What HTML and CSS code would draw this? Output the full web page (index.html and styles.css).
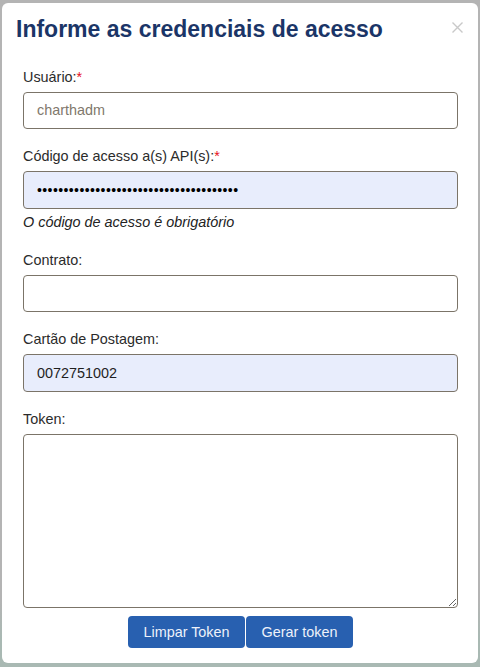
FILE: index.html
```html
<!DOCTYPE html>
<html lang="pt-BR">
<head>
<meta charset="utf-8">
<title>Credenciais</title>
<link rel="stylesheet" href="styles.css">
</head>
<body>
<div class="modal">
  <div class="modal-header">
    <h1 class="modal-title">Informe as credenciais de acesso</h1>
    <button class="close" type="button" aria-label="Fechar">
      <svg width="11" height="11" viewBox="0 0 11 11"><path d="M0.5 0.5 L10.5 10.5 M10.5 0.5 L0.5 10.5" stroke="#c9c9c9" stroke-width="1.4" fill="none"/></svg>
    </button>
  </div>
  <div class="modal-body">
    <div class="field">
      <label class="label">Usuário:<span class="req">*</span></label>
      <input class="input input-muted" type="text" value="charthadm">
    </div>
    <div class="field">
      <label class="label">Código de acesso a(s) API(s):<span class="req">*</span></label>
      <input class="input input-fill input-pass" type="text" value="••••••••••••••••••••••••••••••••••••••">
      <div class="error">O código de acesso é obrigatório</div>
    </div>
    <div class="field">
      <label class="label">Contrato:</label>
      <input class="input" type="text" value="">
    </div>
    <div class="field field-wide">
      <label class="label">Cartão de Postagem:</label>
      <input class="input input-fill" type="text" value="0072751002">
    </div>
    <div class="field field-last">
      <label class="label">Token:</label>
      <textarea class="textarea"></textarea>
    </div>
    <div class="actions">
      <button class="btn" type="button">Limpar Token</button>
      <button class="btn btn-narrow" type="button">Gerar token</button>
    </div>
  </div>
</div>
</body>
</html>
```
FILE: styles.css
```css
* { box-sizing: border-box; }
html, body { margin: 0; padding: 0; }
body {
  width: 480px;
  height: 667px;
  overflow: hidden;
  background: linear-gradient(to bottom, #b4b4b4 0, #b4b4b4 600px, #a9b9b3 640px, #a9b9b3 100%);
  font-family: "Liberation Sans", Arial, sans-serif;
  padding: 3px 2px 4px 2px;
}
.modal {
  background: #fff;
  border-radius: 6px;
  height: 660px;
  width: 476px;
  display: flex;
  flex-direction: column;
}
.modal-header {
  display: flex;
  justify-content: space-between;
  align-items: flex-start;
  padding: 13px 15px 0 14px;
}
.modal-title {
  margin: 0;
  font-size: 23px;
  line-height: 27.6px;
  font-weight: bold;
  color: #1b3567;
}
.close {
  border: 0;
  background: none;
  padding: 0;
  margin-top: 6px;
  width: 11px;
  height: 11px;
  display: block;
}
.close svg { display: block; }
.modal-body {
  padding: 23px 20px 15px 21px;
  display: flex;
  flex-direction: column;
}
.field {
  display: flex;
  flex-direction: column;
  margin-bottom: 17px;
}
.field-wide { margin-bottom: 17.5px; }
.field-last { margin-bottom: 8px; }
.label {
  font-size: 14.4px;
  line-height: 20px;
  color: #2b2b2b;
  margin-bottom: 5px;
}
.req { color: #e8101b; }
.input {
  height: 37.5px;
  width: 435px;
  border: 1px solid #7b7468;
  border-radius: 4px;
  padding: 0 13px;
  font-family: "Liberation Sans", Arial, sans-serif;
  font-size: 14.4px;
  color: #1f1f1f;
  background: #fff;
  outline: none;
}
.input-muted { color: #7f786c; }
.input-fill { background: #e8edfc; }
.input-pass { color: #000; font-size: 14px; letter-spacing: 0.4px; }
.error {
  font-size: 14.4px;
  line-height: 20.5px;
  font-style: italic;
  color: #222;
  margin-top: 3.5px;
}
.textarea {
  width: 435px;
  height: 174px;
  border: 1px solid #7b7468;
  border-radius: 4px;
  background: #fff;
  resize: vertical;
  outline: none;
  font-family: "Liberation Sans", Arial, sans-serif;
}
.actions {
  display: flex;
  justify-content: center;
  gap: 1px;
}
.btn {
  height: 32px;
  width: 117px;
  border: 0;
  border-radius: 4px;
  background: #2860b0;
  color: #eef2fa;
  font-family: "Liberation Sans", Arial, sans-serif;
  font-size: 14.4px;
  padding: 0;
}
.btn-narrow { width: 107px; }
```
